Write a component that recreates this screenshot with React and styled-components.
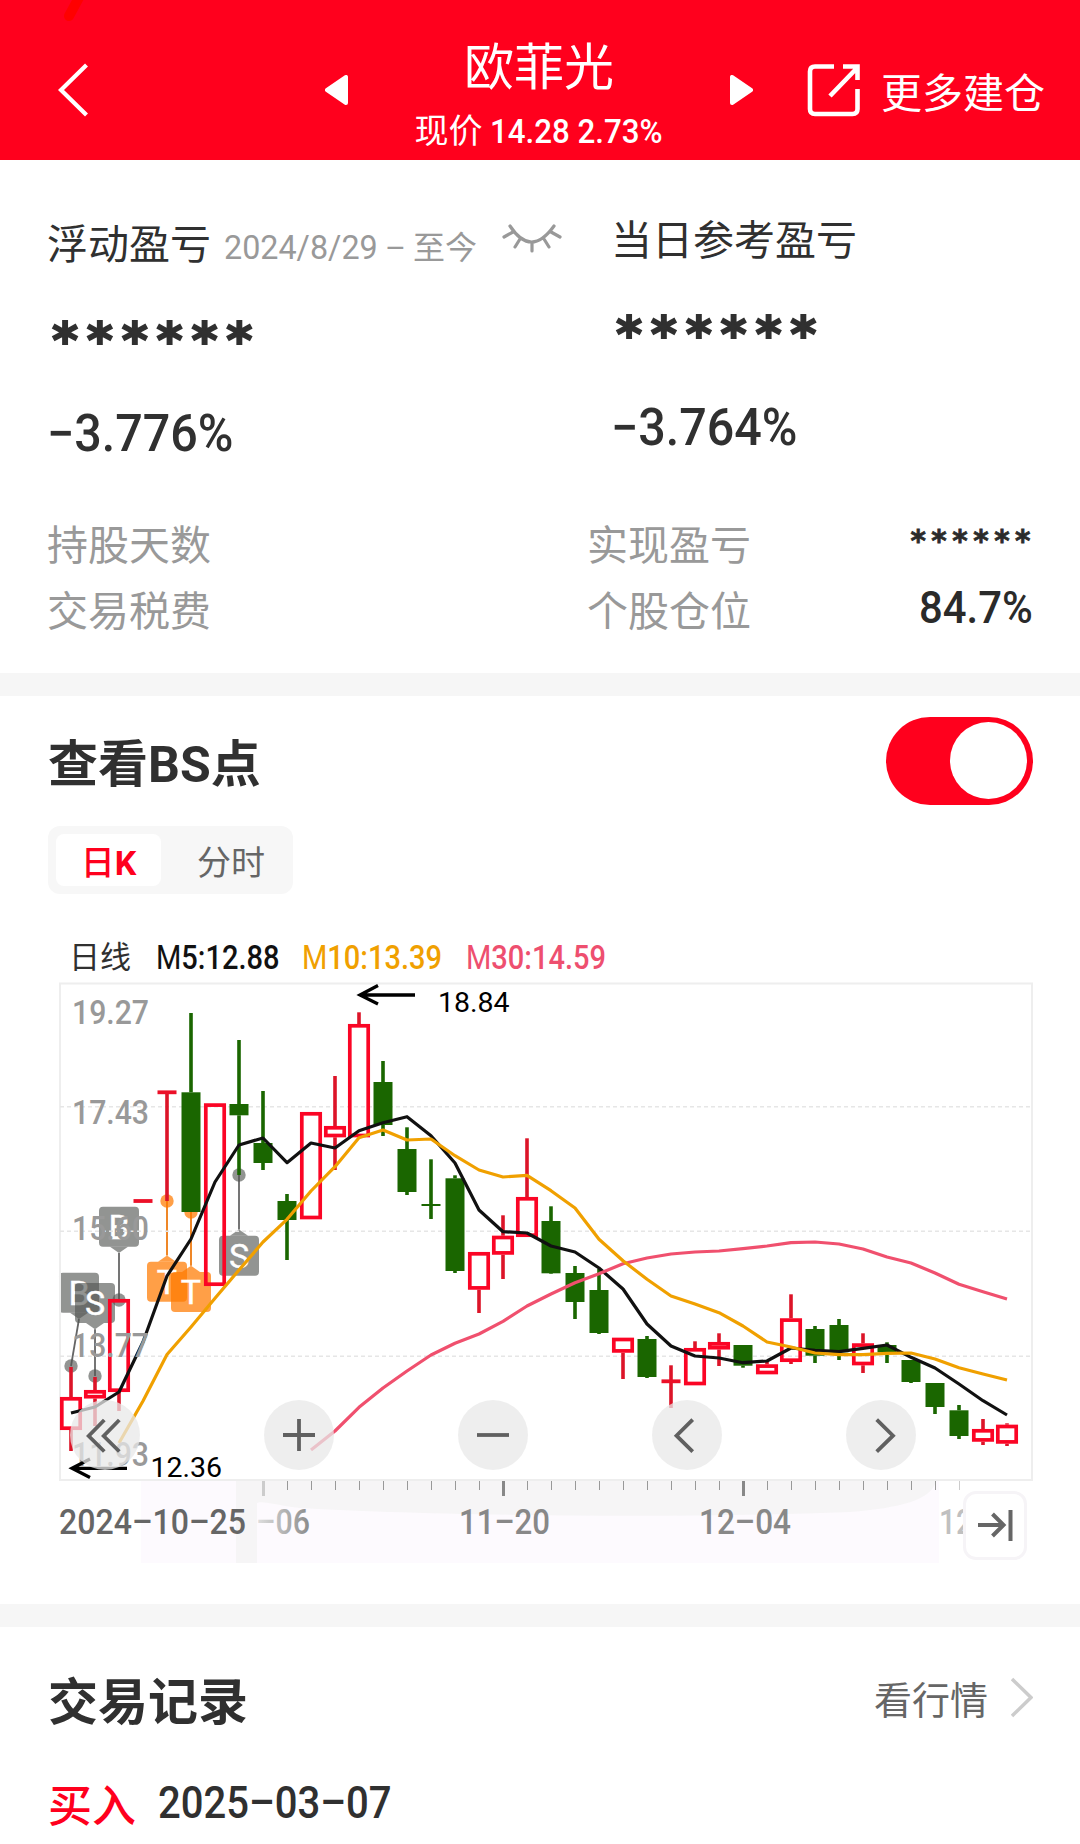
import React from 'react';
import styled, { createGlobalStyle } from 'styled-components';

const GlobalStyle = createGlobalStyle`
  * {
    box-sizing: border-box;
  }
  body {
    margin: 0;
    background: #fff;
    color: #303030;
    font-family: Roboto, "Noto Sans CJK SC", sans-serif;
  }
`;

const Page = styled.div`
  width: 1080px;
  height: 1844px;
  overflow: hidden;
`;

/* digits are drawn narrower than the text around them */
const Num = styled.span`
  display: inline-block;
  width: ${p => p.$w}px;
  font-weight: ${p => p.$weight || 'inherit'};
  white-space: nowrap;
  transform: scaleX(${p => p.$squeeze || 0.93});
  transform-origin: left center;
`;

const Header = styled.header`
  display: flex;
  align-items: center;
  height: 160px;
  background: #ff001d;
  color: #fff;
  position: relative;
`;

const HeaderMark = styled.svg`
  position: absolute;
  left: 60px;
  top: 0;
`;

const BackButton = styled.div`
  width: 325px;
  padding: 20px 0 0 55px;
  line-height: 0;
`;

const Arrow = styled.svg`
  display: block;
  margin-top: 19px;
`;

const StockTitle = styled.div`
  width: 382px;
  padding-top: 26px;
  text-align: center;
`;

const StockName = styled.div`
  font-size: 50px;
  line-height: 60px;
  margin-top: 6px;
`;

const StockPrice = styled.div`
  display: flex;
  justify-content: center;
  gap: 7px;
  font-size: 34px;
  line-height: 48px;
  margin-top: 9px;
`;

const MoreLink = styled.div`
  display: flex;
  align-items: center;
  gap: 20px;
  padding: 20px 0 0 53px;
  font-size: 41px;
  line-height: 48px;
`;

const MoreText = styled.span`
  margin-top: 8px;
`;

const Summary = styled.section`
  display: grid;
  grid-template-columns: 564px 1fr;
  height: 353px;
  padding: 51px 0 0 47px;
`;

const ProfitBox = styled.div`
  margin-top: ${p => p.$top || 0}px;
`;

const ProfitLabel = styled.div`
  display: flex;
  align-items: center;
  height: ${p => p.$height || 60}px;
  font-size: 41px;
`;

const DateRange = styled.span`
  display: flex;
  align-items: baseline;
  gap: 7px;
  margin: 7px 0 0 13px;
  font-size: 32px;
  color: #999;
`;

const DateNum = styled(Num)`
  font-size: 34px;
`;

const EyeIcon = styled.svg`
  margin: -4px 0 0 25px;
`;

const Stars = styled.div`
  height: ${p => (p.$small ? 66 : 94)}px;
  margin: ${p => (p.$small ? '0 -5px 0 0' : '23px 0 0 5px')};
  font-family: "DejaVu Sans", sans-serif;
  font-weight: 700;
  font-size: ${p => (p.$small ? 29.5 : 50)}px;
  line-height: ${p => (p.$small ? 57 : 94)}px;
  letter-spacing: ${p => (p.$small ? 5.5 : 8.7)}px;
  -webkit-text-stroke: ${p => (p.$small ? 0.8 : 1.8)}px #303030;
`;

const Percent = styled.div`
  font-size: 51px;
  font-weight: 500;
  line-height: 60px;
  margin: 16px 0 0 0;
`;

const Details = styled.section`
  display: grid;
  grid-template-columns: 540px 1fr auto;
  height: 160px;
  padding: 0 49px 0 47px;
`;

const DetailColumn = styled.div`
  display: flex;
  flex-direction: column;
  font-size: 41px;
  line-height: 66px;
  color: ${p => (p.$dark ? '#2a2a2a' : '#999')};
`;

const DetailValue = styled.div`
  display: flex;
  justify-content: flex-end;
  font-size: 45px;
  font-weight: 500;
  line-height: 58px;
`;

const Divider = styled.div`
  height: 23px;
  background: #f6f6f6;
`;

const ChartSection = styled.section`
  height: 908px;
`;

const TitleRow = styled.div`
  display: flex;
  justify-content: space-between;
  align-items: center;
  height: 130px;
  padding: 0 47px 0 48px;
`;

const SectionTitle = styled.h2`
  margin: ${p => p.$top || 0}px 0 0;
  font-size: 50px;
  font-weight: 700;
  line-height: 60px;
`;

const Switch = styled.div`
  display: flex;
  justify-content: flex-end;
  width: 147px;
  height: 88px;
  margin-top: -1px;
  padding: 5.5px 6px;
  border-radius: 44px;
  background: #ff001d;
`;

const SwitchKnob = styled.div`
  width: 77px;
  height: 77px;
  border-radius: 50%;
  background: #fff;
`;

const Tabs = styled.div`
  display: flex;
  width: 245px;
  height: 68px;
  margin-left: 48px;
  padding: 8px;
  border-radius: 12px;
  background: #f7f7f7;
`;

const Tab = styled.div`
  flex: none;
  width: ${p => (p.$active ? 105 : 140)}px;
  border-radius: 8px;
  background: ${p => (p.$active ? '#fff' : 'none')};
  color: ${p => (p.$active ? '#ff001d' : '#666')};
  font-size: 34px;
  font-weight: ${p => (p.$active ? 500 : 400)};
  line-height: 58px;
  text-align: center;
  white-space: nowrap;
`;

const Legend = styled.div`
  display: flex;
  align-items: center;
  height: 48px;
  margin-top: 40px;
  padding-left: 69px;
  font-size: 31px;
  line-height: 46px;
`;

const LegendItem = styled.div`
  margin-left: 25px;
  font-size: 33px;
  font-weight: 500;
  line-height: 50px;
  color: ${p => p.$color};
`;

const LegendName = styled.span`
  font-weight: 400;
`;

const ChartBox = styled.div`
  position: relative;
  height: 590px;
  margin-top: -6px;
`;

const ChartSvg = styled.svg`
  display: block;
  font-family: Roboto, sans-serif;
`;

const ChartControls = styled.div`
  position: absolute;
  left: 70px;
  top: 424px;
  display: flex;
  gap: 124px;
`;

const RoundButton = styled.div`
  width: 70px;
  height: 70px;
  border-radius: 50%;
  background: rgba(232, 232, 232, 0.75);
`;

const LatestButton = styled.div`
  position: absolute;
  left: 963px;
  top: 515px;
  width: 64px;
  height: 69px;
  border: 3px solid #f6f4f7;
  border-radius: 13px;
  background: #fff;
`;

const RecordsHeader = styled.div`
  display: flex;
  justify-content: space-between;
  height: 132px;
  padding: 0 47px 0 48px;
`;

const QuoteLink = styled.div`
  display: flex;
  gap: 23px;
  margin-top: 43px;
  font-size: 38px;
  line-height: 63px;
  color: #666;
`;

const RecordRow = styled.div`
  display: flex;
  align-items: center;
  gap: 22px;
  height: 87px;
  padding-left: 48px;
  font-size: 44px;
  font-weight: 500;
`;

const RecordType = styled.span`
  color: #ff001d;
`;

const GREEN = '#1a6600';
const RED = '#fb0525';
const WICK = '#dc1428';

// [color, high, body top, body bottom, low]
const candles = [
  ['r', 1367, 1397, 1430, 1451],
  ['r', 1377, 1390, 1398.5, 1426],
  ['r', 1299, 1299, 1392, 1411],
  ['r', 1201, 1201, 1201, 1201],
  ['r', 1092.3, 1092.3, 1092.3, 1201],
  ['g', 1013, 1092.3, 1212, 1212],
  ['r', 1103.3, 1103.3, 1286, 1286],
  ['g', 1040, 1104, 1115.3, 1175],
  ['g', 1091, 1143, 1163, 1170],
  ['g', 1194, 1201, 1220, 1260],
  ['r', 1112, 1112, 1219.3, 1219.3],
  ['r', 1076, 1126, 1137.3, 1170],
  ['r', 1012.3, 1024, 1137.3, 1137.3],
  ['g', 1061, 1082, 1125, 1136],
  ['g', 1127.3, 1149, 1192, 1195],
  ['g', 1159.3, 1205, 1205, 1219],
  ['g', 1175.3, 1178.3, 1271, 1273],
  ['r', 1252, 1252, 1289.7, 1313],
  ['r', 1215.3, 1235.7, 1254.7, 1279],
  ['r', 1138.3, 1197, 1237, 1237],
  ['g', 1206.3, 1221, 1273.3, 1274],
  ['g', 1266, 1273, 1302, 1319],
  ['g', 1269, 1290, 1333, 1334],
  ['r', 1337.7, 1337.7, 1352.7, 1379],
  ['g', 1336, 1339, 1377, 1378],
  ['r', 1365.3, 1381.3, 1381.3, 1408],
  ['r', 1341.3, 1348, 1385.3, 1385.3],
  ['r', 1333.3, 1342, 1349.5, 1366],
  ['g', 1345, 1345, 1365.7, 1367.7],
  ['r', 1361.7, 1364.3, 1374.3, 1374.3],
  ['r', 1294.3, 1318.3, 1362, 1364],
  ['g', 1326, 1329, 1355.7, 1363],
  ['g', 1319, 1325, 1352.3, 1360],
  ['r', 1333.3, 1343.3, 1365.3, 1373],
  ['g', 1342.3, 1345, 1352.3, 1363],
  ['g', 1360, 1360, 1382, 1383],
  ['g', 1383, 1383, 1407, 1414],
  ['g', 1405, 1410.3, 1436, 1439],
  ['r', 1419, 1429, 1441.7, 1445],
  ['r', 1423.3, 1424.7, 1443.7, 1446],
];

const ma5 = [
  1413, 1407, 1392, 1342, 1276, 1239, 1182, 1145, 1138, 1162.7, 1143, 1148, 1130.7, 1122.7,
  1116.7, 1135.7, 1163, 1210, 1231.7, 1233, 1246, 1252, 1268, 1289, 1324, 1346, 1356, 1358,
  1362.7, 1361, 1348, 1350.3, 1351.7, 1348.3, 1345, 1357.3, 1368, 1384, 1400.7, 1415,
];
const ma10 = [
  1443, 1401, 1354.5, 1327, 1298.3, 1270, 1242, 1219.3, 1191, 1166.7, 1137.7, 1130, 1140, 1139,
  1155.7, 1170, 1177, 1175.3, 1190.7, 1208, 1239.3, 1260.7, 1279.3, 1296, 1304, 1312.7, 1326,
  1342, 1347, 1353, 1354.7, 1354.7, 1353.3, 1353, 1359, 1367.7, 1374, 1380,
];
const ma30 = [
  1450, 1431, 1407.3, 1388, 1371, 1355, 1343.3, 1334, 1321.3, 1306, 1294, 1282.7, 1273.7,
  1263.7, 1258, 1254, 1252, 1251, 1248.7, 1246, 1242.7, 1242, 1244, 1249, 1257, 1263, 1273,
  1284.3, 1291.7, 1299,
];

const badges = [
  { text: 'B', x: 79, y: 1272.7, dotX: 71, dotY: 1366 },
  { text: 'S', x: 95, y: 1283, dotX: 95, dotY: 1376 },
  { text: 'B', x: 119, y: 1206.7, dotX: 119, dotY: 1300 },
  { text: 'T', x: 167, y: 1261.7, dotX: 167, dotY: 1201, up: true, orange: true },
  { text: 'T', x: 191, y: 1272, dotX: 191, dotY: 1212, up: true, orange: true },
  { text: 'S', x: 239, y: 1235.7, dotX: 239, dotY: 1175, up: true },
];

const priceLabels = [
  ['19.27', 1024],
  ['17.43', 1124],
  ['15.60', 1240],
  ['13.77', 1357],
  ['11.93', 1465.5],
];

const candleX = i => 71 + i * 24;
const toPoints = (values, start) =>
  values.map((v, i) => `${candleX(i + start)},${v}`).join(' ');

const Candle = ({ x, data }) => {
  const [type, high, top, bottom, low] = data;
  const red = type === 'r';
  const wick = red ? WICK : GREEN;
  if (top === bottom) {
    return (
      <g fill={wick}>
        <rect x={x - 1.8} y={high} width="3.6" height={low - high} />
        <rect x={x - 9.5} y={top - (red ? 1.9 : 1)} width="19" height={red ? 3.8 : 2} fill={red ? '#ec1028' : wick} />
      </g>
    );
  }
  return (
    <g>
      <rect x={x - 1.8} y={high} width="3.6" height={top - high} fill={wick} />
      <rect x={x - 1.8} y={bottom} width="3.6" height={low - bottom} fill={wick} />
      {red ? (
        <rect x={x - 9.2} y={top + 1.8} width="18.4" height={bottom - top - 3.6} fill="none" stroke={RED} strokeWidth="3.7" />
      ) : (
        <rect x={x - 9.5} y={top} width="19" height={bottom - top} fill={GREEN} />
      )}
    </g>
  );
};

const Badge = ({ text, x, y, dotX, dotY, up, orange }) => {
  const fill = orange ? 'rgba(255, 122, 0, 0.72)' : 'rgba(82, 86, 82, 0.63)';
  const tip = up ? y - 6.3 : y + 46.3;
  const base = up ? y : y + 40;
  return (
    <g>
      <line x1={x} y1={tip} x2={dotX} y2={dotY} stroke={orange ? '#ee7a10' : '#666'} strokeWidth="1.8" />
      <circle cx={dotX} cy={dotY} r="6.7" fill={fill} />
      <path d={`M${x - 9} ${base}L${x} ${tip}L${x + 9} ${base}Z`} fill={fill} />
      <rect x={x - 20} y={y} width="40" height="40" rx="4" fill={fill} />
      <text x={x} y={y + 32} fontSize="34" fill="#fff" stroke="#fff" strokeWidth="0.4" textAnchor="middle">{text}</text>
    </g>
  );
};

const ticks = [];
for (let x = 287; x < 970; x += 24) {
  if (x !== 503 && x !== 743) ticks.push(x);
}

const KLineChart = () => (
  <ChartSvg width="1080" height="590" viewBox="0 976 1080 590">
    <defs>
      <linearGradient id="fadeIn" gradientUnits="userSpaceOnUse" x1="256" y1="0" x2="312" y2="0">
        <stop offset="0" stopColor="#e0e0e0" />
        <stop offset="1" stopColor="#888" />
      </linearGradient>
    </defs>
    <rect x="141" y="1481" width="798" height="82" fill="#fdfafe" />
    <path d="M236 1481H936C932 1500 900 1508 850 1512C650 1520 400 1514 300 1508C280 1506 262 1500 257 1503V1563H236Z" fill="#f6f5f6" />
    {badges.map((b, i) => (
      <Badge key={'badge' + i} {...b} />
    ))}
    <rect x="60" y="983.5" width="972" height="496.5" fill="none" stroke="#eee" strokeWidth="2" />
    {[1106.7, 1231.3, 1356.3].map(y => (
      <line key={y} x1="60" x2="1032" y1={y} y2={y} stroke="#e6e6e6" strokeWidth="1.5" strokeDasharray="4 3" />
    ))}
    {candles.map((c, i) => (
      <Candle key={'candle' + i} x={candleX(i)} data={c} />
    ))}
    <g fill="none" strokeWidth="3.2" strokeLinejoin="round">
      <polyline points={toPoints(ma5, 0)} stroke="#111" />
      <polyline points={toPoints(ma30, 10)} stroke="#f0506e" />
      <polyline points={toPoints(ma10, 2)} stroke="#f0a000" />
    </g>
    <g fill="#999" fontSize="34" fontWeight="500">
      {priceLabels.map(([text, y]) => (
        <text key={text} x="72" y={y} textLength="77" lengthAdjust="spacingAndGlyphs">{text}</text>
      ))}
    </g>
    <g fill="none" stroke="#000" strokeWidth="3.3">
      <path d="M415 995H360M378 985.5L360 995L378 1004" />
      <path d="M127 1468.3H72M90 1459L72 1468.3L90 1477.5" />
    </g>
    <g fill="#000" fontSize="28.5">
      <text x="438" y="1012">18.84</text>
      <text x="150.5" y="1477">12.36</text>
    </g>
    {ticks.map(x => (
      <rect key={x} x={x} y="1481" width="1" height="9" fill={x > 950 ? '#ccc' : '#999'} />
    ))}
    <rect x="262" y="1481" width="3" height="15" fill="#ccc" />
    <rect x="502" y="1481" width="3" height="15" fill="#888" />
    <rect x="742" y="1481" width="3" height="15" fill="#888" />
    <g fontSize="35" fontWeight="500" fill="#888">
      <text x="59" y="1533.5" fill="#666" textLength="187" lengthAdjust="spacingAndGlyphs">2024–10–25</text>
      <text x="256" y="1533.5" fill="url(#fadeIn)" textLength="54" lengthAdjust="spacingAndGlyphs">–06</text>
      <text x="459" y="1533.5" textLength="91" lengthAdjust="spacingAndGlyphs">11–20</text>
      <text x="699" y="1533.5" textLength="92" lengthAdjust="spacingAndGlyphs">12–04</text>
      <text x="939" y="1533.5" fill="#c0c0c0" textLength="34" lengthAdjust="spacingAndGlyphs">12</text>
    </g>
  </ChartSvg>
);

const controls = [
  'M34.3 20L18.7 36L34.3 51.5M49.3 20L33.7 36L49.3 51.5',
  'M19 35H51M35 19V51',
  'M19 35H51',
  'M40.7 19.7L24.5 35.7L40.7 51.7',
  'M30.7 19.7L47 35.7L30.7 51.7',
];

const App = () => {
  return (
    <Page>
      <GlobalStyle />
      <Header>
        <HeaderMark width="30" height="24">
          <path d="M22 -8L9 16" stroke="#ff0000" strokeWidth="10" strokeLinecap="round" />
        </HeaderMark>
        <BackButton>
          <svg width="36" height="56" fill="none" stroke="#fff" strokeWidth="4.2">
            <path d="M31.5 3L6 28L31.5 53" />
          </svg>
        </BackButton>
        <Arrow width="23" height="30">
          <path d="M21 2V28L2 15Z" fill="#fff" stroke="#fff" strokeWidth="4" strokeLinejoin="round" />
        </Arrow>
        <StockTitle>
          <StockName>欧菲光</StockName>
          <StockPrice>
            现价
            <Num $w={174} $squeeze={0.92} $weight={500}>14.28 2.73%</Num>
          </StockPrice>
        </StockTitle>
        <Arrow width="23" height="30">
          <path d="M2 2V28L21 15Z" fill="#fff" stroke="#fff" strokeWidth="4" strokeLinejoin="round" />
        </Arrow>
        <MoreLink>
          <svg width="55" height="56" fill="none" stroke="#fff" strokeWidth="4.6">
            <path d="M28 4.5H9Q4 4.5 4 9.5V47Q4 52 9 52H46.5Q51.5 52 51.5 47V27M37 4.5H51.5V18M24 34L51 6" />
          </svg>
          <MoreText>更多建仓</MoreText>
        </MoreLink>
      </Header>

      <Summary>
        <ProfitBox>
          <ProfitLabel>
            浮动盈亏
            <DateRange>
              <DateNum $w={154} $squeeze={0.95}>2024/8/29</DateNum>
              <span>–</span>
              <span>至今</span>
            </DateRange>
            <EyeIcon width="60" height="30" fill="none" stroke="#999" strokeWidth="3.2" strokeLinecap="round">
              <path d="M8 2Q29 34 52 2M2 13L11 8M58 13L49 8M13 23L18 15M47 23L42 15M30 27V18" />
            </EyeIcon>
          </ProfitLabel>
          <Stars>******</Stars>
          <Percent><Num $w={184} $squeeze={0.95}>−3.776%</Num></Percent>
        </ProfitBox>
        <ProfitBox $top={-2}>
          <ProfitLabel $height={56}>当日参考盈亏</ProfitLabel>
          <Stars>******</Stars>
          <Percent><Num $w={184} $squeeze={0.95}>−3.764%</Num></Percent>
        </ProfitBox>
      </Summary>
      <Details>
        <DetailColumn>
          <span>持股天数</span>
          <span>交易税费</span>
        </DetailColumn>
        <DetailColumn>
          <span>实现盈亏</span>
          <span>个股仓位</span>
        </DetailColumn>
        <DetailColumn $dark>
          <Stars $small>******</Stars>
          <DetailValue><Num $w={112} $squeeze={0.93}>84.7%</Num></DetailValue>
        </DetailColumn>
      </Details>
      <Divider />

      <ChartSection>
        <TitleRow>
          <SectionTitle $top={7}>查看BS点</SectionTitle>
          <Switch><SwitchKnob /></Switch>
        </TitleRow>
        <Tabs>
          <Tab $active>日<b>K</b></Tab>
          <Tab>分时</Tab>
        </Tabs>
        <Legend>
          日线
          <LegendItem $color="#111">
            <Num $w={121} $squeeze={0.88}><LegendName>M</LegendName>5:12.88</Num>
          </LegendItem>
          <LegendItem $color="#f0a000">
            <Num $w={139} $squeeze={0.88}><LegendName>M</LegendName>10:13.39</Num>
          </LegendItem>
          <LegendItem $color="#ee4f6f">
            <Num $w={139} $squeeze={0.88}><LegendName>M</LegendName>30:14.59</Num>
          </LegendItem>
        </Legend>
        <ChartBox>
          <KLineChart />
          <ChartControls>
            {controls.map(d => (
              <RoundButton key={d}>
                <svg width="70" height="70" fill="none" stroke="#606060" strokeWidth="3.8">
                  <path d={d} />
                </svg>
              </RoundButton>
            ))}
          </ChartControls>
          <LatestButton>
            <svg width="58" height="63" fill="none" stroke="#666" strokeWidth="4">
              <path d="M12 31H37M26.5 20L37.5 31L26.5 42M44.5 16V47" />
            </svg>
          </LatestButton>
        </ChartBox>
      </ChartSection>
      <Divider />

      <section>
        <RecordsHeader>
          <SectionTitle $top={46}>交易记录</SectionTitle>
          <QuoteLink>
            看行情
            <svg width="22" height="60" fill="none" stroke="#ccc" strokeWidth="3.5">
              <path d="M1 9L20 27.5L1 46" />
            </svg>
          </QuoteLink>
        </RecordsHeader>
        <RecordRow>
          <RecordType>买入</RecordType>
          <Num $w={234} $squeeze={0.91}>2025–03–07</Num>
        </RecordRow>
      </section>
    </Page>
  );
};

export default App;
